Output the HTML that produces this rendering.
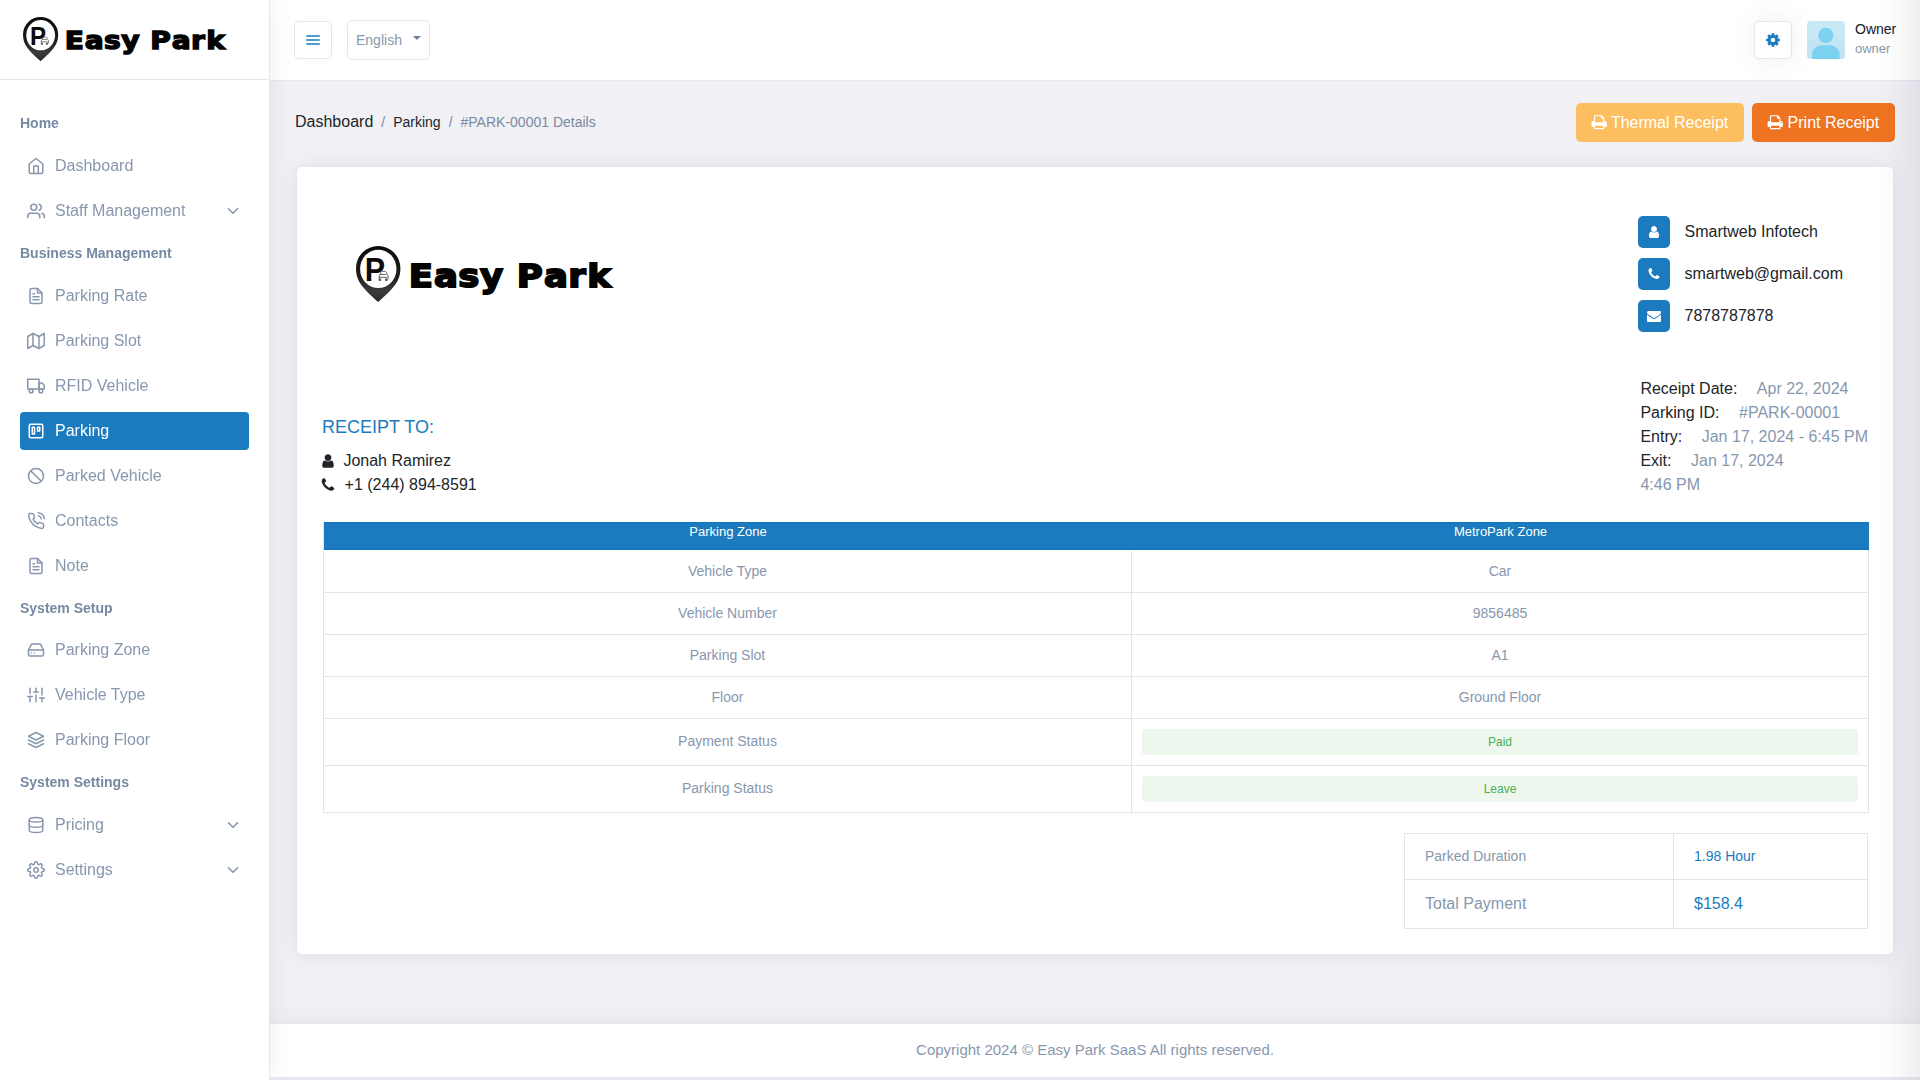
<!DOCTYPE html>
<html lang="en">
<head>
<meta charset="utf-8">
<title>#PARK-00001 Details - Easy Park</title>
<style>
*{box-sizing:border-box;margin:0;padding:0}
html,body{width:1920px;height:1080px;overflow:hidden}
body{font-family:"Liberation Sans",Arial,sans-serif;font-size:14px;color:#1f2937;background:#f0f0f5;position:relative}
svg{display:block}
/* ---------- sidebar ---------- */
.sidebar{position:absolute;left:0;top:0;width:270px;height:1080px;background:#fff;border-right:1px solid #e6e7ea;box-shadow:0 1px 20px 0 rgba(69,90,100,.1);z-index:5}
.brand{height:80px;border-bottom:1px solid #e6e7ea;position:relative}
.nav{position:absolute;left:0;top:80px;width:269px;height:1000px;will-change:transform}
.cap{position:absolute;left:20px;font-weight:bold;font-size:14px;line-height:20px;color:#7689a3;white-space:nowrap}
.item{position:absolute;left:20px;width:229px;height:38px;border-radius:4px;color:#8797ae;font-size:16px;line-height:38px;white-space:nowrap}
.item svg.ic{position:absolute;left:7px;top:10px;width:18px;height:18px;fill:none;stroke:currentColor;stroke-width:2;stroke-linecap:round;stroke-linejoin:round}
.item span{position:absolute;left:35px;top:0}
.item svg.ar{position:absolute;left:204px;top:10px;width:18px;height:18px;fill:none;stroke:#8294ab;stroke-width:2;stroke-linecap:round;stroke-linejoin:round}
.item.active{background:#1b7bbe;color:#fff}
/* ---------- header ---------- */
.header{position:absolute;left:270px;top:0;width:1650px;height:80px;background:#fff;box-shadow:0 1px 0 #e6e9f3;z-index:3}
.hbtn{position:absolute;background:#fff;border:1px solid #e7e7e7;border-radius:5px}
.lang{position:absolute;left:77px;top:20px;width:83px;height:40px;border:1px solid #e7e7e7;border-radius:5px;color:#8797ae;font-size:14px;line-height:38px;padding-left:8px}
.lang i{position:absolute;left:65px;top:14.500px;width:0;height:0;border-left:4px solid transparent;border-right:4px solid transparent;border-top:4px solid #6f7f97}
.avatar{position:absolute;left:1537px;top:21px;width:38px;height:38px;border-radius:4px;overflow:hidden;background:#c9e8f5}
.uname{position:absolute;left:1585px;top:19px;font-size:14px;line-height:20px;color:#111827}
.urole{position:absolute;left:1585px;top:39px;font-size:13px;line-height:20px;color:#8797ae}
/* ---------- page ---------- */
.crumbs{position:absolute;left:295px;top:110px;height:24px;line-height:24px;white-space:nowrap;font-size:14px;color:#212529}
.crumbs b{font-weight:normal;font-size:16px}
.crumbs em{font-style:normal;color:#7a8aa2;padding:0 8px}
.crumbs u{text-decoration:none;color:#7a8aa2}
.btn{position:absolute;top:103px;height:39px;border-radius:5px;color:#fff;font-size:16px;line-height:39px;white-space:nowrap}
.btn svg{position:absolute;top:12px;width:15px;height:15px;fill:#fff}
.btn span{position:absolute;top:0}
.card{position:absolute;left:297px;top:167px;width:1596px;height:787px;background:#fff;border-radius:5px;box-shadow:0 1px 20px 0 rgba(69,90,100,.1)}
.footer{position:absolute;left:270px;top:1024px;width:1650px;height:53px;background:#fff;box-shadow:0 1px 20px 0 rgba(69,90,100,.1);text-align:center;font-size:15px;line-height:52px;color:#8797ae}
/*CARDCSS*/
.cbox{position:absolute;left:1341px;width:32px;height:32px;border-radius:5px;background:#1b7bbe}
.ctxt{position:absolute;left:1387.500px;font-size:16px;line-height:31px;color:#212529;white-space:nowrap}
.rinfo{position:absolute;left:1343.400px;font-size:16px;line-height:24px;color:#212529;white-space:nowrap}
.rinfo span{color:#8797ae;margin-left:19.500px}
.rto{position:absolute;left:25px;top:248px;font-size:18px;line-height:24px;color:#1b7bbe;white-space:nowrap}
.rline{position:absolute;left:25px;height:24px;font-size:16px;line-height:24px;color:#212529;white-space:nowrap}
.rline span{position:absolute;top:0}
.tbl{position:absolute;left:26px;top:355px;width:1546px;border-left:1px solid #e4e4e4;border-right:1px solid #e4e4e4}
.tbl .th{height:28px;margin:0 -1px 1px 0;background:#1b7bbe;border-top:1px solid #1373b8;border-bottom:1px solid #1373b8;color:#fff;font-size:13px;line-height:17px;position:relative}
.tbl .tr{height:42px;border-bottom:1px solid #e4e4e4;position:relative;color:#8797ae;font-size:14px;line-height:40px}
.tbl .c1{position:absolute;left:0;top:0;width:808px;height:100%;text-align:center;border-right:1px solid #e4e4e4}
.tbl .c2{position:absolute;left:808px;top:0;right:0;height:100%;text-align:center}
.tbl .th .c1{border-right:0}
.badge{position:absolute;left:10px;right:10px;top:10px;height:26px;border-radius:4px;background:#edf7ee;color:#4caf50;font-size:12px;line-height:26px;text-align:center}
.sum{position:absolute;left:1107px;top:666px;width:464px;height:96px;border:1px solid #e4e4e4;color:#8797ae}
.sum .sr{position:relative;border-bottom:1px solid #e4e4e4}
.sum .s1{position:absolute;left:20px;top:0;white-space:nowrap}
.sum .s2{position:absolute;left:268px;top:0;bottom:0;right:0;border-left:1px solid #e4e4e4;padding-left:20px;color:#1b7bbe;white-space:nowrap}
/*/CARDCSS*/
.edge{position:absolute;left:1920px;top:-50px;width:40px;height:1180px;background:#000;box-shadow:0 0 45px rgba(40,45,70,.16);z-index:9}
</style>
</head>
<body>
<!-- SIDEBAR -->
<div class="sidebar">
  <div class="brand"><svg style="position:absolute;left:22.800px;top:17.400px" width="213.840" height="47.520" viewBox="0 0 270 60"><defs><linearGradient id="pg2" x1="0" y1="0" x2="0" y2="1"><stop offset="0" stop-color="#0a0a0a"/><stop offset=".55" stop-color="#1e1e1e"/><stop offset=".8" stop-color="#3c3a3d"/><stop offset="1" stop-color="#2a2a2a"/></linearGradient></defs><path d="M22.200 0A22.200 22.200 0 0 1 44.400 22.200C44.400 35 38 42 22.200 56 6.400 42 0 35 0 22.200A22.200 22.200 0 0 1 22.200 0z" fill="url(#pg2)"/>
<ellipse cx="22.300" cy="22.900" rx="18.200" ry="19.200" fill="#fff"/>
<text transform="translate(8.800 35) scale(.94 1)" font-family="Liberation Sans, sans-serif" font-weight="bold" font-size="32.400" fill="#0c0c0c">P</text>
<g transform="translate(-.2 1.700) scale(.95)" fill="none" stroke="#4a4a4a" stroke-width=".9" stroke-linejoin="round"><path d="M24.600 33v-3.300q0-1.200 1-1.600l.9-2.200q.5-1 1.500-1h2.600q1 0 1.500 1l.9 2.200q1 .4 1 1.600V33"/><path d="M25.600 28.200h6.400M24.600 31.200h8.400"/><path d="M24.600 32.600v2h1.600v-2M31.400 32.600v2h1.600v-2" fill="#4a4a4a"/></g><text transform="scale(1,.905)" y="45.200" font-family="DejaVu Sans, Liberation Sans, sans-serif" font-weight="bold" font-size="35.500" fill="#030303" stroke="#030303" stroke-width="2" stroke-linejoin="miter" stroke-miterlimit="3" x="52.800 78.100 102.300 124.100 144.100 160.700 187.900 212.300 231.300">Easy Park</text></svg></div><!--/BRAND-->
  <div class="nav">
<div class="cap" style="top:33px">Home</div>
<div class="item" style="top:67px"><svg class="ic" viewBox="0 0 24 24"><path d="M3 9l9-7 9 7v11a2 2 0 0 1-2 2H5a2 2 0 0 1-2-2z"/><polyline points="9 22 9 12 15 12 15 22"/></svg><span>Dashboard</span></div>
<div class="item" style="top:112px"><svg class="ic" viewBox="0 0 24 24"><path d="M17 21v-2a4 4 0 0 0-4-4H5a4 4 0 0 0-4 4v2"/><circle cx="9" cy="7" r="4"/><path d="M23 21v-2a4 4 0 0 0-3-3.870"/><path d="M16 3.130a4 4 0 0 1 0 7.750"/></svg><span>Staff Management</span><svg class="ar" viewBox="0 0 24 24"><polyline points="6 9 12 15 18 9"/></svg></div>
<div class="cap" style="top:163px">Business Management</div>
<div class="item" style="top:197px"><svg class="ic" viewBox="0 0 24 24"><path d="M14 2H6a2 2 0 0 0-2 2v16a2 2 0 0 0 2 2h12a2 2 0 0 0 2-2V8z"/><polyline points="14 2 14 8 20 8"/><line x1="16" y1="13" x2="8" y2="13"/><line x1="16" y1="17" x2="8" y2="17"/><polyline points="10 9 9 9 8 9"/></svg><span>Parking Rate</span></div>
<div class="item" style="top:242px"><svg class="ic" viewBox="0 0 24 24"><polygon points="1 6 1 22 8 18 16 22 23 18 23 2 16 6 8 2 1 6"/><line x1="8" y1="2" x2="8" y2="18"/><line x1="16" y1="6" x2="16" y2="22"/></svg><span>Parking Slot</span></div>
<div class="item" style="top:287px"><svg class="ic" viewBox="0 0 24 24"><rect x="1" y="3" width="15" height="13"/><polygon points="16 8 20 8 23 11 23 16 16 16 16 8"/><circle cx="5.500" cy="18.500" r="2.500"/><circle cx="18.500" cy="18.500" r="2.500"/></svg><span>RFID Vehicle</span></div>
<div class="item active" style="top:332px"><svg class="ic" viewBox="0 0 24 24"><rect x="3" y="3" width="18" height="18" rx="2" ry="2"/><rect x="7" y="7" width="3" height="9"/><rect x="14" y="7" width="3" height="5"/></svg><span>Parking</span></div>
<div class="item" style="top:377px"><svg class="ic" viewBox="0 0 24 24"><circle cx="12" cy="12" r="10"/><line x1="4.930" y1="4.930" x2="19.070" y2="19.070"/></svg><span>Parked Vehicle</span></div>
<div class="item" style="top:422px"><svg class="ic" viewBox="0 0 24 24"><path d="M15.050 5A5 5 0 0 1 19 8.950M15.050 1A9 9 0 0 1 23 8.940m-1 7.980v3a2 2 0 0 1-2.180 2 19.790 19.790 0 0 1-8.630-3.070 19.500 19.500 0 0 1-6-6 19.790 19.790 0 0 1-3.070-8.670A2 2 0 0 1 4.110 2h3a2 2 0 0 1 2 1.720 12.840 12.840 0 0 0 .7 2.810 2 2 0 0 1-.45 2.110L8.090 9.910a16 16 0 0 0 6 6l1.270-1.270a2 2 0 0 1 2.110-.45 12.840 12.840 0 0 0 2.810.7A2 2 0 0 1 22 16.920z"/></svg><span>Contacts</span></div>
<div class="item" style="top:467px"><svg class="ic" viewBox="0 0 24 24"><path d="M14 2H6a2 2 0 0 0-2 2v16a2 2 0 0 0 2 2h12a2 2 0 0 0 2-2V8z"/><polyline points="14 2 14 8 20 8"/><line x1="16" y1="13" x2="8" y2="13"/><line x1="16" y1="17" x2="8" y2="17"/><polyline points="10 9 9 9 8 9"/></svg><span>Note</span></div>
<div class="cap" style="top:518px">System Setup</div>
<div class="item" style="top:551px"><svg class="ic" viewBox="0 0 24 24"><line x1="22" y1="12" x2="2" y2="12"/><path d="M5.450 5.110L2 12v6a2 2 0 0 0 2 2h16a2 2 0 0 0 2-2v-6l-3.450-6.890A2 2 0 0 0 16.760 4H7.240a2 2 0 0 0-1.790 1.110z"/><line x1="6" y1="16" x2="6.010" y2="16"/><line x1="10" y1="16" x2="10.010" y2="16"/></svg><span>Parking Zone</span></div>
<div class="item" style="top:596px"><svg class="ic" viewBox="0 0 24 24"><line x1="4" y1="21" x2="4" y2="14"/><line x1="4" y1="10" x2="4" y2="3"/><line x1="12" y1="21" x2="12" y2="12"/><line x1="12" y1="8" x2="12" y2="3"/><line x1="20" y1="21" x2="20" y2="16"/><line x1="20" y1="12" x2="20" y2="3"/><line x1="1" y1="14" x2="7" y2="14"/><line x1="9" y1="8" x2="15" y2="8"/><line x1="17" y1="16" x2="23" y2="16"/></svg><span>Vehicle Type</span></div>
<div class="item" style="top:641px"><svg class="ic" viewBox="0 0 24 24"><polygon points="12 2 2 7 12 12 22 7 12 2"/><polyline points="2 17 12 22 22 17"/><polyline points="2 12 12 17 22 12"/></svg><span>Parking Floor</span></div>
<div class="cap" style="top:692px">System Settings</div>
<div class="item" style="top:726px"><svg class="ic" viewBox="0 0 24 24"><ellipse cx="12" cy="5" rx="9" ry="3"/><path d="M21 12c0 1.660-4 3-9 3s-9-1.340-9-3"/><path d="M3 5v14c0 1.660 4 3 9 3s9-1.340 9-3V5"/></svg><span>Pricing</span><svg class="ar" viewBox="0 0 24 24"><polyline points="6 9 12 15 18 9"/></svg></div>
<div class="item" style="top:771px"><svg class="ic" viewBox="0 0 24 24"><circle cx="12" cy="12" r="3"/><path d="M19.400 15a1.650 1.650 0 0 0 .33 1.820l.06.06a2 2 0 0 1 0 2.830 2 2 0 0 1-2.830 0l-.06-.06a1.650 1.650 0 0 0-1.820-.33 1.650 1.650 0 0 0-1 1.510V21a2 2 0 0 1-2 2 2 2 0 0 1-2-2v-.09A1.650 1.650 0 0 0 9 19.400a1.650 1.650 0 0 0-1.820.33l-.06.06a2 2 0 0 1-2.830 0 2 2 0 0 1 0-2.830l.06-.06a1.650 1.650 0 0 0 .33-1.820 1.650 1.650 0 0 0-1.510-1H3a2 2 0 0 1-2-2 2 2 0 0 1 2-2h.09A1.650 1.650 0 0 0 4.600 9a1.650 1.650 0 0 0-.33-1.820l-.06-.06a2 2 0 0 1 0-2.830 2 2 0 0 1 2.830 0l.06.06a1.650 1.650 0 0 0 1.820.33H9a1.650 1.650 0 0 0 1-1.510V3a2 2 0 0 1 2-2 2 2 0 0 1 2 2v.09a1.650 1.650 0 0 0 1 1.510 1.650 1.650 0 0 0 1.820-.33l.06-.06a2 2 0 0 1 2.830 0 2 2 0 0 1 0 2.830l-.06.06a1.650 1.650 0 0 0-.33 1.820V9a1.650 1.650 0 0 0 1.510 1H21a2 2 0 0 1 2 2 2 2 0 0 1-2 2h-.09a1.650 1.650 0 0 0-1.510 1z"/></svg><span>Settings</span><svg class="ar" viewBox="0 0 24 24"><polyline points="6 9 12 15 18 9"/></svg></div>
</div><!--/NAV-->
</div>
<!-- HEADER -->
<div class="header">
  <div class="hbtn" style="left:24px;top:21px;width:38px;height:38px"><svg viewBox="0 0 14 10" style="position:absolute;left:11px;top:13px;width:14px;height:10px;fill:#4f9acb"><rect x="0" y="0" width="14" height="2" rx="1"/><rect x="0" y="4" width="14" height="2" rx="1"/><rect x="0" y="8" width="14" height="2" rx="1"/></svg></div>
  <div class="lang">English<i></i></div>
  <div class="hbtn" style="left:1484px;top:21px;width:38px;height:38px;box-shadow:0 0 24px rgba(120,130,150,.13)"><svg viewBox="0 0 1792 1792" style="position:absolute;width:16px;height:16px;left:10px;top:10px;fill:#1b7bbe"><path d="M1152 896q0-106-75-181t-181-75-181 75-75 181 75 181 181 75 181-75 75-181zm512-109v222q0 12-8 23t-20 13l-185 28q-19 54-39 91 35 50 107 138 10 12 10 25t-9 23q-27 37-99 108t-94 71q-12 0-26-9l-138-108q-44 23-91 38-16 136-29 186-7 28-36 28h-222q-14 0-24.500-8.500t-11.500-21.500l-28-184q-49-16-90-37l-141 107q-10 9-25 9-14 0-25-11-126-114-165-168-7-10-7-23 0-12 8-23 15-21 51-66.500t54-70.500q-27-50-41-99l-183-27q-13-2-21-12.500t-8-23.500v-222q0-12 8-23t19-13l186-28q14-46 39-92-40-57-107-138-10-12-10-24 0-10 9-23 26-36 98.500-107.500t94.500-71.500q13 0 26 10l138 107q44-23 91-38 16-136 29-186 7-28 36-28h222q14 0 24.500 8.500t11.500 21.500l28 184q49 16 90 37l142-107q9-9 24-9 13 0 25 10 129 119 165 170 7 8 7 22 0 12-8 23-15 21-51 66.500t-54 70.500q26 50 41 98l183 28q13 2 21 12.500t8 23.500z"/></svg></div>
  <div class="avatar"><svg width="38" height="38" viewBox="0 0 38 38"><path d="M0 22 Q19 10 38 22 V38 H0z" fill="#c3e4f2"/><circle cx="18.800" cy="14.300" r="7.600" fill="#7bd2f0"/><path d="M5 38v-4.300a9.500 9.500 0 0 1 9.500-9.500h8.600a9.500 9.500 0 0 1 9.500 9.500V38z" fill="#7bd2f0"/></svg></div>
  <div class="uname">Owner</div>
  <div class="urole">owner</div>
</div><!--/HEADER-->
<!-- PAGE -->
<div class="crumbs"><b>Dashboard</b><em>/</em>Parking<em>/</em><u>#PARK-00001 Details</u></div>
<!--BUTTONS-->
<div class="btn" style="left:1576px;width:168px;background:#fdbe5f"><svg viewBox="0 0 1792 1792" style="position:absolute;width:16.4px;height:16.4px;left:14.800px;top:10.800px;fill:#fff"><path d="M448 1536h896v-256h-896v256zm0-640h896v-384h-160q-40 0-68-28t-28-68v-160h-640v640zm1152 64q0-26-19-45t-45-19-45 19-19 45 19 45 45 19 45-19 19-45zm128 0v416q0 13-9.500 22.500t-22.500 9.500h-224v160q0 40-28 68t-68 28h-960q-40 0-68-28t-28-68v-160h-224q-13 0-22.500-9.500t-9.500-22.500v-416q0-79 56.500-135.500t135.500-56.500h64v-544q0-40 28-68t68-28h672q40 0 88 20t76 48l152 152q28 28 48 76t20 88v256h64q79 0 135.500 56.500t56.500 135.500z"/></svg><span style="left:34.900px">Thermal Receipt</span></div>
<div class="btn" style="left:1752px;width:143px;background:#ef7422"><svg viewBox="0 0 1792 1792" style="position:absolute;width:16.4px;height:16.4px;left:14.800px;top:10.800px;fill:#fff"><path d="M448 1536h896v-256h-896v256zm0-640h896v-384h-160q-40 0-68-28t-28-68v-160h-640v640zm1152 64q0-26-19-45t-45-19-45 19-19 45 19 45 45 19 45-19 19-45zm128 0v416q0 13-9.500 22.500t-22.500 9.500h-224v160q0 40-28 68t-68 28h-960q-40 0-68-28t-28-68v-160h-224q-13 0-22.500-9.500t-9.500-22.500v-416q0-79 56.500-135.500t135.500-56.500h64v-544q0-40 28-68t68-28h672q40 0 88 20t76 48l152 152q28 28 48 76t20 88v256h64q79 0 135.500 56.500t56.500 135.500z"/></svg><span style="left:35.600px">Print Receipt</span></div>
<!--/BUTTONS-->
<div class="card">
<svg style="position:absolute;left:58.600px;top:79px" width="270" height="60" viewBox="0 0 270 60"><defs><linearGradient id="pg" x1="0" y1="0" x2="0" y2="1"><stop offset="0" stop-color="#0a0a0a"/><stop offset=".55" stop-color="#1e1e1e"/><stop offset=".8" stop-color="#3c3a3d"/><stop offset="1" stop-color="#2a2a2a"/></linearGradient></defs><path d="M22.200 0A22.200 22.200 0 0 1 44.400 22.200C44.400 35 38 42 22.200 56 6.400 42 0 35 0 22.200A22.200 22.200 0 0 1 22.200 0z" fill="url(#pg)"/>
<ellipse cx="22.300" cy="22.900" rx="18.200" ry="19.200" fill="#fff"/>
<text transform="translate(8.800 35) scale(.94 1)" font-family="Liberation Sans, sans-serif" font-weight="bold" font-size="32.400" fill="#0c0c0c">P</text>
<g transform="translate(-.2 1.700) scale(.95)" fill="none" stroke="#4a4a4a" stroke-width=".9" stroke-linejoin="round"><path d="M24.600 33v-3.300q0-1.200 1-1.600l.9-2.200q.5-1 1.500-1h2.600q1 0 1.500 1l.9 2.200q1 .4 1 1.600V33"/><path d="M25.600 28.200h6.400M24.600 31.200h8.400"/><path d="M24.600 32.600v2h1.600v-2M31.400 32.600v2h1.600v-2" fill="#4a4a4a"/></g><text transform="scale(1,.905)" y="45.200" font-family="DejaVu Sans, Liberation Sans, sans-serif" font-weight="bold" font-size="35.500" fill="#030303" stroke="#030303" stroke-width="2" stroke-linejoin="miter" stroke-miterlimit="3" x="52.800 78.100 102.300 124.100 144.100 160.700 187.900 212.300 231.300">Easy Park</text></svg>
<div class="cbox" style="top:49px"><svg viewBox="0 0 1792 1792" style="position:absolute;width:14px;height:14px;left:9px;top:9px;fill:#fff"><path d="M1536 1399q0 109-62.500 187t-150.500 78h-854q-88 0-150.500-78t-62.500-187q0-85 8.500-160.500t31.500-152 58.500-131 94-89 134.500-34.500q131 128 313 128t313-128q76 0 134.500 34.500t94 89 58.500 131 31.500 152 8.500 160.500zm-256-887q0 159-112.500 271.500t-271.500 112.500-271.500-112.500-112.500-271.500 112.500-271.500 271.500-112.500 271.500 112.500 112.500 271.500z"/></svg></div><div class="ctxt" style="top:49px">Smartweb Infotech</div>
<div class="cbox" style="top:91px"><svg viewBox="0 0 1792 1792" style="position:absolute;width:14px;height:14px;left:9px;top:9px;fill:#fff"><path d="M1600 1240q0 27-10 70.500t-21 68.500q-21 50-122 106-94 51-186 51-27 0-53-3.500t-57.500-12.500-47-14.500-55.500-20.500-49-18q-98-35-175-83-127-79-264-216t-216-264q-48-77-83-175-3-9-18-49t-20.500-55.500-14.500-47-12.500-57.500-3.500-53q0-92 51-186 56-101 106-122 25-11 68.500-21t70.500-10q14 0 21 3 18 6 53 76 11 19 30 54t35 63.500 31 53.500q3 4 17.500 25t21.500 35.500 7 28.500q0 20-28.500 50t-62 55-62 53-28.500 46q0 9 5 22.500t8.500 20.500 14 24 11.500 19q76 137 174 235t235 174q2 1 19 11.500t24 14 20.500 8.500 22.500 5q18 0 46-28.500t53-62 55-62 50-28.500q14 0 28.500 7t35.500 21.500 25 17.500q25 15 53.500 31t63.500 35 54 30q70 35 76 53 3 7 3 21z"/></svg></div><div class="ctxt" style="top:91px">smartweb@gmail.com</div>
<div class="cbox" style="top:133px"><svg viewBox="0 0 1792 1792" style="position:absolute;width:14px;height:14px;left:9px;top:9px;fill:#fff"><path d="M1792 710v794q0 66-47 113t-113 47h-1472q-66 0-113-47t-47-113v-794q44 49 101 87 362 246 497 345 57 42 92.500 65.500t94.500 48 110 24.500h2q51 0 110-24.500t94.500-48 92.500-65.500q170-123 498-345 57-39 100-87zm0-294q0 79-49 151t-122 123q-376 261-468 325-10 7-42.500 30.500t-54 38-52 32.500-57.500 27-50 9h-2q-23 0-50-9t-57.500-27-52-32.500-54-38-42.500-30.500q-91-64-262-182.500t-205-142.500q-62-42-117-115.500t-55-136.500q0-78 41.500-130t118.500-52h1472q65 0 112.500 47t47.500 113z"/></svg></div><div class="ctxt" style="top:133px">7878787878</div>
<div class="rinfo" style="top:210px">Receipt Date:<span>Apr 22, 2024</span></div>
<div class="rinfo" style="top:234px">Parking ID:<span>#PARK-00001</span></div>
<div class="rinfo" style="top:258px">Entry:<span>Jan 17, 2024 - 6:45 PM</span></div>
<div class="rinfo" style="top:282px">Exit:<span>Jan 17, 2024</span></div>
<div class="rinfo" style="top:306px"><span style="margin:0">4:46 PM</span></div>
<div class="rto">RECEIPT TO:</div>
<div class="rline" style="top:282px"><svg viewBox="0 0 1792 1792" style="position:absolute;width:16px;height:16px;left:-2.300px;top:4px;fill:#212529"><path d="M1536 1399q0 109-62.500 187t-150.500 78h-854q-88 0-150.500-78t-62.500-187q0-85 8.500-160.500t31.500-152 58.500-131 94-89 134.500-34.500q131 128 313 128t313-128q76 0 134.500 34.500t94 89 58.500 131 31.500 152 8.500 160.500zm-256-887q0 159-112.500 271.500t-271.500 112.500-271.500-112.500-112.500-271.500 112.500-271.500 271.500-112.500 271.500 112.500 112.500 271.500z"/></svg><span style="left:21.400px">Jonah Ramirez</span></div>
<div class="rline" style="top:306px"><svg viewBox="0 0 1792 1792" style="position:absolute;width:16px;height:16px;left:-1.700px;top:4.400px;fill:#212529"><path d="M1600 1240q0 27-10 70.500t-21 68.500q-21 50-122 106-94 51-186 51-27 0-53-3.500t-57.500-12.500-47-14.500-55.500-20.500-49-18q-98-35-175-83-127-79-264-216t-216-264q-48-77-83-175-3-9-18-49t-20.500-55.500-14.500-47-12.500-57.500-3.500-53q0-92 51-186 56-101 106-122 25-11 68.500-21t70.500-10q14 0 21 3 18 6 53 76 11 19 30 54t35 63.500 31 53.500q3 4 17.500 25t21.500 35.500 7 28.500q0 20-28.500 50t-62 55-62 53-28.500 46q0 9 5 22.500t8.500 20.500 14 24 11.500 19q76 137 174 235t235 174q2 1 19 11.500t24 14 20.500 8.500 22.500 5q18 0 46-28.500t53-62 55-62 50-28.500q14 0 28.500 7t35.500 21.500 25 17.500q25 15 53.500 31t63.500 35 54 30q70 35 76 53 3 7 3 21z"/></svg><span style="left:22.600px">+1 (244) 894-8591</span></div>
<div class="tbl"><div class="th"><div class="c1">Parking Zone</div><div class="c2">MetroPark Zone</div></div><div class="tr"><div class="c1">Vehicle Type</div><div class="c2">Car</div></div><div class="tr"><div class="c1">Vehicle Number</div><div class="c2">9856485</div></div><div class="tr"><div class="c1">Parking Slot</div><div class="c2">A1</div></div><div class="tr"><div class="c1">Floor</div><div class="c2">Ground Floor</div></div><div class="tr" style="height:47px"><div class="c1" style="line-height:44px">Payment Status</div><div class="c2"><div class="badge">Paid</div></div></div><div class="tr" style="height:47px"><div class="c1" style="line-height:44px">Parking Status</div><div class="c2"><div class="badge">Leave</div></div></div></div>
<div class="sum"><div class="sr" style="height:46px;line-height:45px;font-size:14px"><div class="s1">Parked Duration</div><div class="s2">1.98 Hour</div></div><div class="sr" style="height:48px;line-height:48px;font-size:16px;border-bottom:0"><div class="s1">Total Payment</div><div class="s2">$158.4</div></div></div>
</div><!--/CARD-->
<div class="edge"></div>
<div class="footer">Copyright 2024 © Easy Park SaaS All rights reserved.</div>
</body>
</html>
